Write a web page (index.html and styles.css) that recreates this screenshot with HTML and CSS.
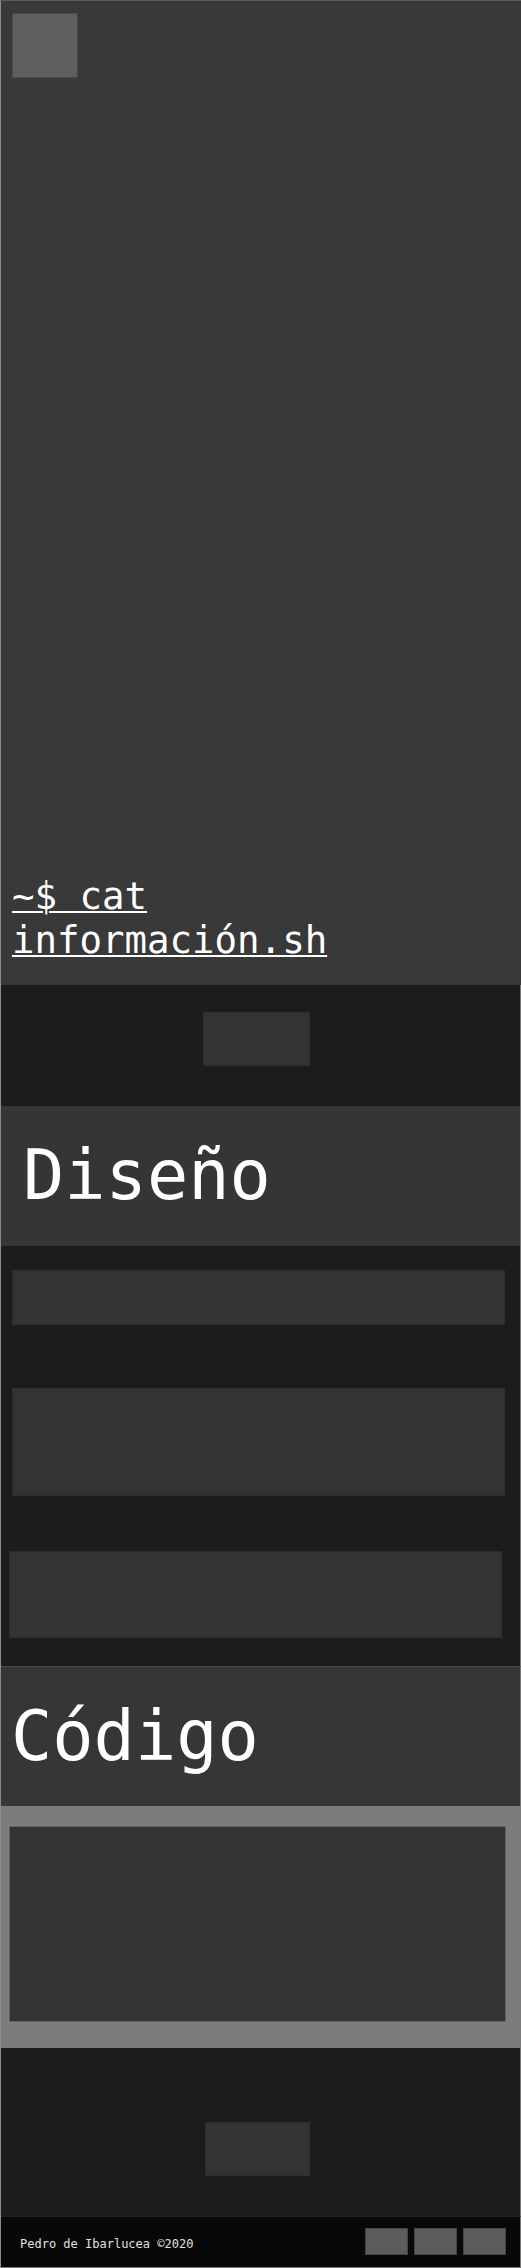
FILE: index.html
```html
<!DOCTYPE html>
<html lang="es">
<head>
<meta charset="utf-8">
<title>Pedro de Ibarlucea</title>
<link rel="stylesheet" href="styles.css">
</head>
<body>
<div class="page">
  <header class="hero">
    <div class="logo"></div>
    <h1 class="hero-title"><a href="#">~$ cat información.sh</a></h1>
  </header>
  <section class="band band-intro">
    <div class="ph ph-small"></div>
  </section>
  <section class="title-band title-design">
    <h2 class="section-title">Diseño</h2>
  </section>
  <section class="band band-design">
    <div class="ph ph-a"></div>
    <div class="ph ph-b"></div>
    <div class="ph ph-c"></div>
  </section>
  <section class="title-band title-code">
    <h2 class="section-title">Código</h2>
  </section>
  <section class="band-grey">
    <div class="ph ph-code"></div>
  </section>
  <section class="band band-contact">
    <div class="ph ph-small2"></div>
  </section>
  <footer class="footer">
    <span class="credit">Pedro de Ibarlucea ©2020</span>
    <div class="socials">
      <span class="social"></span>
      <span class="social"></span>
      <span class="social"></span>
    </div>
  </footer>
</div>
</body>
</html>
```
FILE: styles.css
```css
* { box-sizing: border-box; }
html, body { margin: 0; padding: 0; background: #1c1c1c; }
body { font-family: "DejaVu Sans Mono", "Liberation Mono", monospace; color: #fff; }

.page {
  width: 521px;
  border-left: 1px solid #8c8c8c;
  border-top: 1px solid #5c5c5c;
  display: flex;
  flex-direction: column;
}

.hero {
  height: 984px;
  background: #393939;
  display: flex;
  flex-direction: column;
  justify-content: space-between;
  padding: 12px 0 23px 11px;
}
.logo {
  width: 66px;
  height: 65px;
  background: #5e5e5e;
  border: 1px solid #4a4a4a;
}
.hero-title {
  margin: 0;
  font-size: 37.4px;
  line-height: 44px;
  font-weight: 400;
  width: 330px;
}
.hero-title a { color: #fff; text-decoration: underline; text-decoration-thickness: 2px; text-underline-offset: 2px; }

.band { background: #1c1c1c; border-right: 1px solid #777; }
.ph { background: #333; border: 1px solid #2d2d2d; }

.band-intro { height: 121px; display: flex; justify-content: center; padding: 27px 8px 0 0; }
.ph-small { width: 107px; height: 54px; }

.title-band { border-right: 1px solid #777; }
.title-design { background: #353535; height: 140px; padding: 29px 0 0 22px; }
.title-code { background: #363636; height: 140px; padding: 29px 0 0 10px; border-top: 1px solid #4a4a4a; }
.section-title {
  margin: 0;
  font-size: 68.6px;
  line-height: 80px;
  font-weight: 400;
}

.band-design { height: 420px; padding: 24px 15px 0 11px; display: flex; flex-direction: column; }
.ph-a { height: 55px; }
.ph-b { height: 108px; margin-top: 63px; }
.ph-c { height: 87px; margin-top: 55px; margin-left: -3px; margin-right: 3px; }

.band-grey { background: #7c7c7c; height: 242px; padding: 20px 15px 0 8px; }
.ph-code { height: 196px; border-color: #5f5f5f; }

.band-contact { height: 168px; display: flex; justify-content: center; padding: 74px 6px 0 0; }
.ph-small2 { width: 105px; height: 54px; }

.footer {
  height: 52px;
  background: #080808;
  border-top: 1px solid #222;
  border-right: 1px solid #777;
  border-bottom: 1px solid #777;
  display: flex;
  align-items: center;
  justify-content: space-between;
  padding: 0 14px 0 19px;
}
.credit { font-size: 12px; color: #e0e0e0; padding-top: 4px; }
.socials { display: flex; gap: 6px; margin-top: -2px; }
.social { display: block; width: 43px; height: 27px; background: #5c5c5c; border: 1px solid #444; }
```
